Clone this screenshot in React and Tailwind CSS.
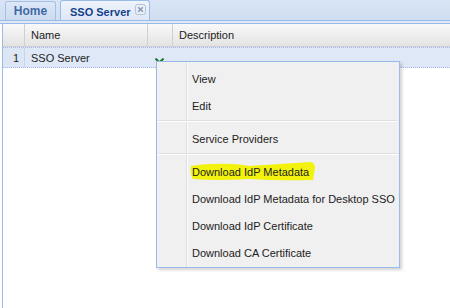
const menuItems = [
    { label: "View" },
    { label: "Edit" },
    { sep: true },
    { label: "Service Providers" },
    { sep: true },
    { label: "Download IdP Metadata", marked: true },
    { label: "Download IdP Metadata for Desktop SSO" },
    { label: "Download IdP Certificate" },
    { label: "Download CA Certificate" },
];

function CloseIcon() {
    return (
        <svg width="11" height="11" viewBox="0 0 11 11" className="block">
            <rect x="0.5" y="0.5" width="10" height="10" rx="2" fill="#e8eef7" stroke="#b5c3d6" />
            <path d="M3.2 3.2 L7.8 7.8 M7.8 3.2 L3.2 7.8" stroke="#8a9bb3" strokeWidth="1.6" />
        </svg>
    );
}

function ActionArrow() {
    return (
        <svg width="9" height="6" viewBox="0 0 9 6" className="block">
            <path d="M0.5 0.5 L4.5 4.5 L8.5 0.5" fill="none" stroke="#1d7a24" strokeWidth="2" />
        </svg>
    );
}

export default function App() {
    return (
        <div
            className="relative w-[450px] h-[308px] overflow-hidden bg-white text-[11px] text-[#222]"
            style={{ fontFamily: "'Liberation Sans', Tahoma, sans-serif" }}
        >
            {/* TABS */}
            <div className="h-[21px] bg-gradient-to-b from-[#d9e5f5] to-[#d0def2] border-b border-[#99bbe8] flex items-end pl-[5px] gap-[4px] whitespace-nowrap">
                <div className="w-[51px] h-[19px] rounded-t-[3px] border border-b-0 border-[#a5c0e5] bg-gradient-to-b from-[#dde8f7] to-[#cbdbf1] flex items-center justify-center font-bold text-[12px] text-[#416aa3]">
                    Home
                </div>
                <div className="w-[90px] h-[20px] rounded-t-[3px] border border-b-0 border-[#99bbe8] bg-gradient-to-b from-[#eef3fb] to-[#dfe8f6] flex items-start pl-[9px] pr-[3px] pt-[2px] font-bold text-[12px] text-[#15428b]">
                    <span className="mt-[1px] text-[11px]">SSO Server</span>
                    <span className="ml-auto mt-[1px]"><CloseIcon /></span>
                </div>
            </div>
            <div className="h-[3px] bg-[#dfe8f6] border-b border-[#99bbe8]" />

            {/* GRID */}
            <div className="ml-[2px] border-l border-[#99bbe8] h-full">
                <div className="flex h-[23px] bg-gradient-to-b from-[#f9f9f9] to-[#e3e3e3] border-b border-[#d0d0d0]">
                    <div className="w-[22px] border-r border-[#d0d0d0]" />
                    <div className="w-[123px] border-r border-[#d0d0d0] flex items-center pl-[6px]">Name</div>
                    <div className="w-[25px] border-r border-[#d0d0d0]" />
                    <div className="flex-1 flex items-center pl-[6px]">Description</div>
                </div>
                <div className="flex h-[21px] bg-[#dfe8f6] border-t border-b border-dotted border-[#a3bae9]">
                    <div className="w-[22px] border-r border-[#c5d4ea] bg-[#dce6f4] flex items-center justify-end pr-[5px] pt-[1px]">1</div>
                    <div className="w-[123px] flex items-center pl-[6px] pt-[1px]">SSO Server</div>
                    <div className="w-[25px] flex items-end pl-[7px] pb-[3px]">
                        <ActionArrow />
                    </div>
                    <div className="flex-1" />
                </div>
            </div>

            {/* CONTEXT MENU */}
            <div className="absolute left-[156px] top-[61px] w-[244px] h-[207px] bg-[#f0f0f0] border border-[#99bbe8] shadow-[2px_2px_3px_rgba(0,0,0,0.18)] pt-[3px]">
                <div className="absolute left-[29px] top-0 bottom-0 w-[2px] border-l border-[#e0e0e0] bg-white/70" />
                {menuItems.map((item, i) =>
                    item.sep ? (
                        <div key={i} className="relative h-[6px] px-[1px] pt-[1px]">
                            <div className="h-[2px] border-t border-[#e0e0e0] bg-white" />
                        </div>
                    ) : (
                        <div key={i} className="relative h-[27px] flex items-center pl-[35px] pt-[1px] whitespace-nowrap">
                            {item.marked && (
                                <svg className="absolute left-[32px] top-[2px]" width="130" height="23" viewBox="0 0 130 23">
                                    <path
                                        d="M2 6 Q20 3 45 4 Q55 5 60 6 Q90 4 122 2 Q126 3 126 8 Q125 14 124 20 Q90 21 60 19 Q30 21 4 19 Q1 15 2 6 Z"
                                        fill="#f2f20c"
                                    />
                                </svg>
                            )}
                            <span className="relative">{item.label}</span>
                        </div>
                    )
                )}
            </div>
        </div>
    );
}
